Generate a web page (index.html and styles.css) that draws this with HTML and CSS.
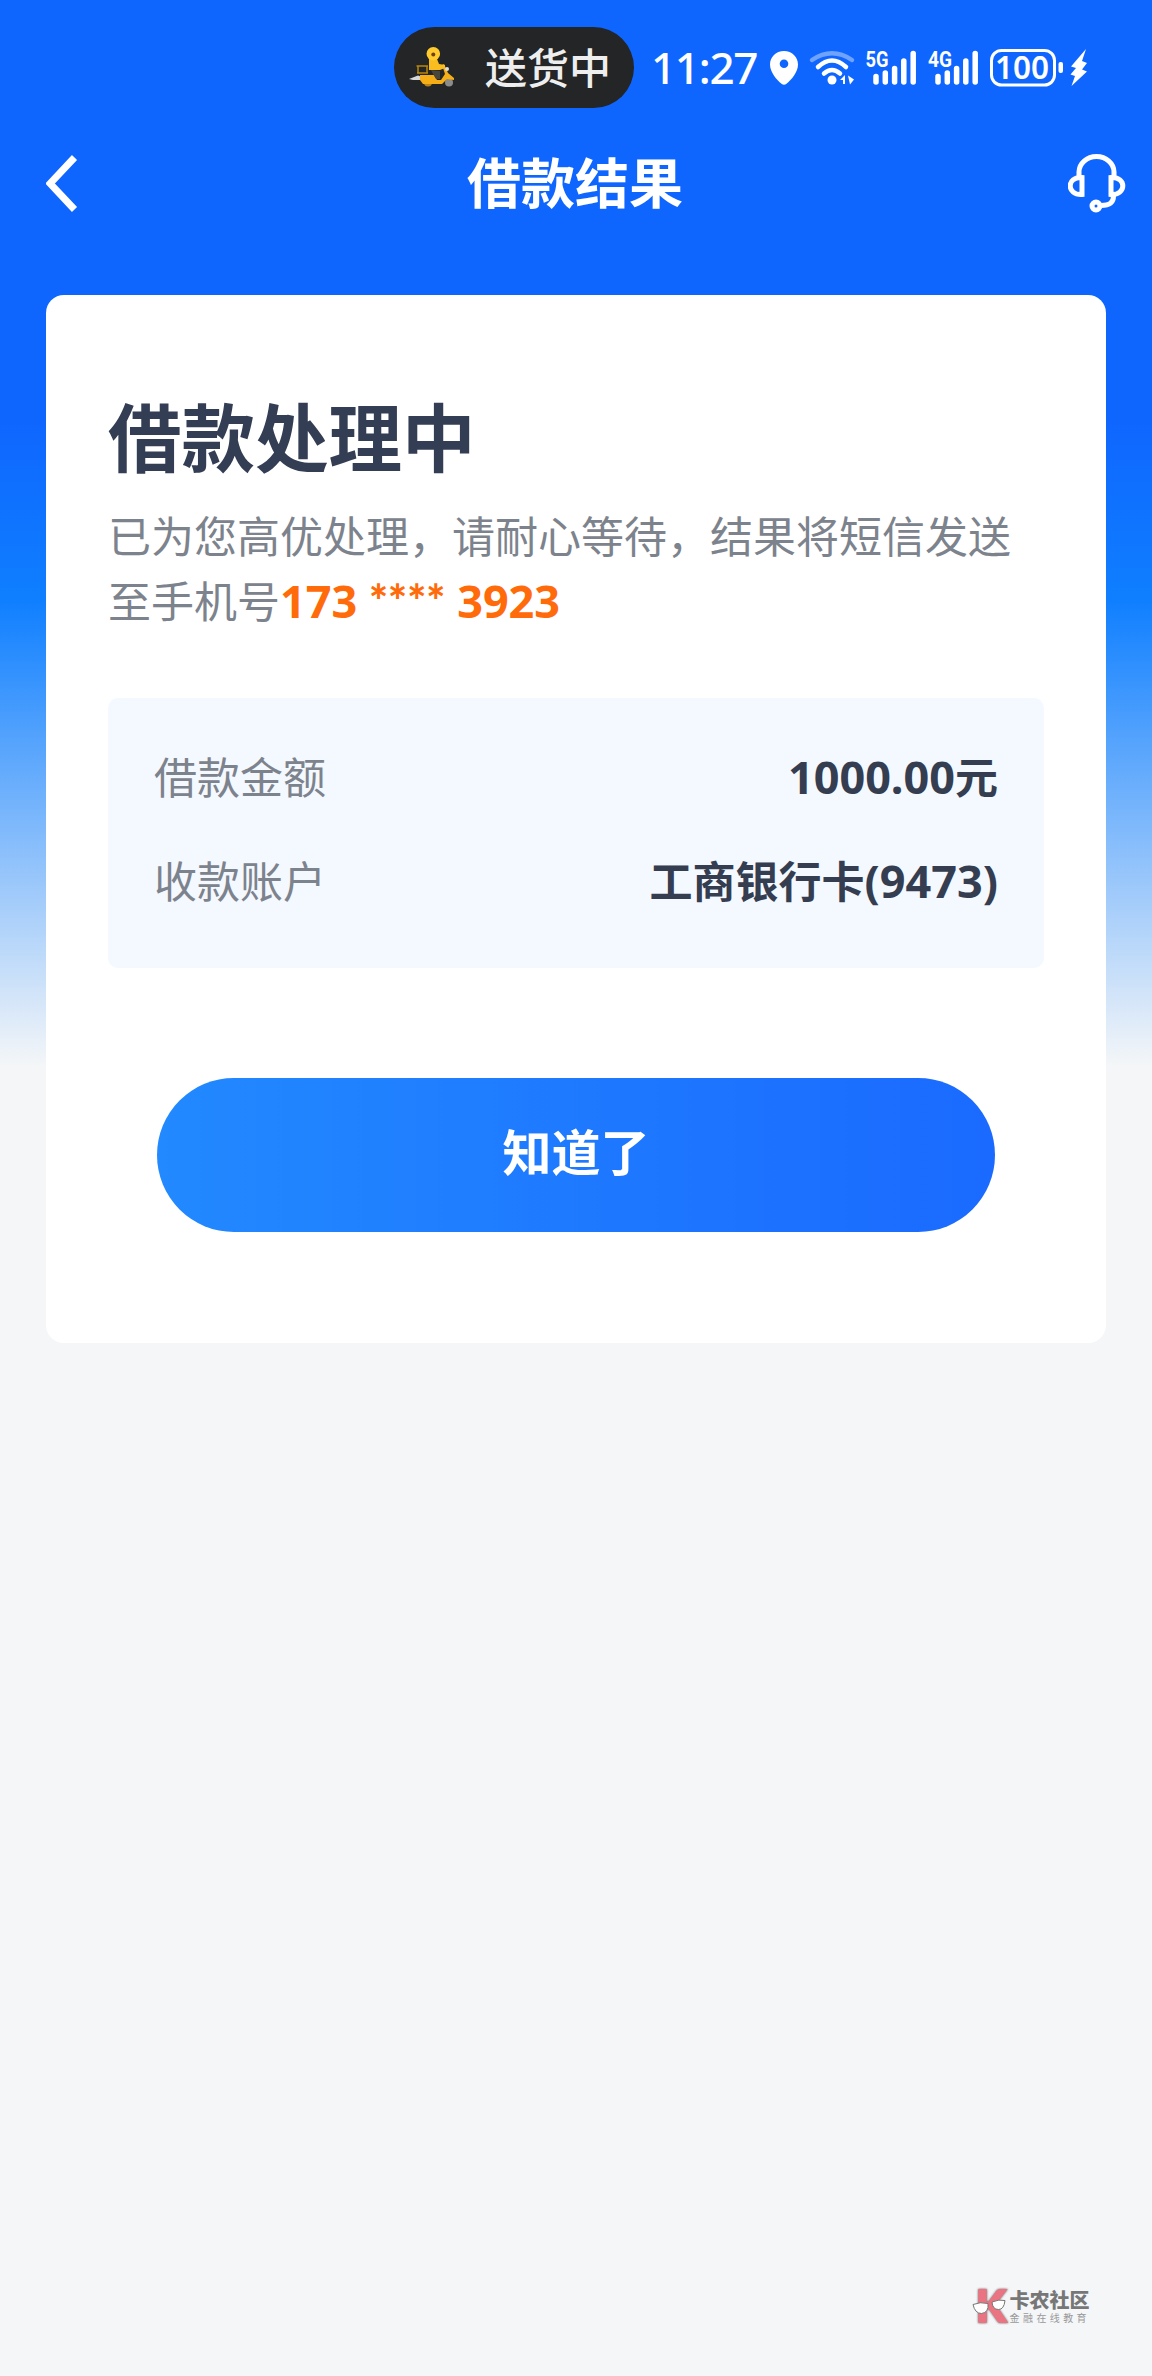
FILE: index.html
```
<!DOCTYPE html>
<html lang="zh-CN">
<head>
    <meta charset="UTF-8" />
    <meta name="viewport" content="width=device-width, initial-scale=1.0" />
    <link rel="stylesheet" href="styles.css">
    <title>借款结果</title>
</head>
<body>
    <div class="page">
        <div class="status-bar">
            <div class="pill">
                <svg class="courier" width="46" height="42" viewBox="0 0 46 42">
                    <path d="M0 32L9 28.500L13 30V33L4 33Z" fill="#d8d8d8" />
                    <path d="M7.500 19H19M9 19.500V26M18 19.500V26M8 26H19" fill="none" stroke="#b8860b" stroke-width="1.500" />
                    <circle cx="19" cy="35.500" r="4" fill="#b9831a" />
                    <circle cx="40" cy="35.500" r="4" fill="#8b8b8b" />
                    <path d="M11 28H25L28 33H32L36 27L33 18L35 17L39 26L45 31V33L38 32L33 37H14L11 33Z" fill="#f5ae16" />
                    <path d="M22 23L31 24V32H27L24 27Z" fill="#4a4639" />
                    <path d="M20 12H28L30 17L36 18V21L31 23H20Z" fill="#f9bd20" />
                    <circle cx="24.300" cy="6.800" r="6.800" fill="#ffcb2e" />
                    <circle cx="24.300" cy="7.500" r="2" fill="#70420d" />
                    <circle cx="38" cy="22" r="2" fill="#ddd" />
                </svg>
                <span>送货中</span>
            </div>
            <span class="time">11:27</span>
            <svg class="icons" width="320" height="40" viewBox="768 48 320 40">
                <!-- location -->
                <path fill="#fff" fill-rule="evenodd" d="M784 51c-8 0-14 6-14 13.500c0 8 7 15.500 11.500 19.300q2.500 1.800 5 0C791 80 798 72.500 798 64.500C798 57 792 51 784 51zm0 8.500a4.300 4.300 0 1 1 0 8.600a4.300 4.300 0 0 1 0-8.600z" />
                <!-- wifi -->
                <g fill="none" stroke="#fff" stroke-width="4.500" stroke-linecap="round">
                    <path d="M812 60Q832 46.500 852 60" stroke-opacity=".4" />
                    <path d="M818 67Q832 54 846 67" />
                    <path d="M824 73.500Q832 66.500 840 73.500" />
                </g>
                <circle cx="832" cy="80" r="4.500" fill="#fff" />
                <path fill="#fff" d="M840 80l5-5v9h-2v-4zM848 75.500l6 4-4 5z" />
                <!-- signal bars -->
                <g stroke="#fff" stroke-width="5.500" stroke-linecap="round">
                    <path d="M876 76.500V82M885.300 73V82M894.600 68.500V82M903.800 61V82M913.200 53.500V82" />
                    <path d="M938 76.500V82M947.300 73V82M956.600 68.500V82M965.800 61V82M975.200 53.500V82" />
                </g>
                <text class="net" x="865.500" y="67" textLength="23" lengthAdjust="spacingAndGlyphs">5G</text>
                <text class="net" x="928" y="67" textLength="24" lengthAdjust="spacingAndGlyphs">4G</text>
                <!-- battery -->
                <rect x="991.500" y="50.500" width="63" height="34.500" rx="10" fill="none" stroke="#fff" stroke-width="3" />
                <rect x="1058.500" y="62" width="4.500" height="11" rx="2" fill="#fff" />
                <text class="level" x="995" y="79" textLength="54" lengthAdjust="spacingAndGlyphs">100</text>
                <path fill="#fff" d="M1086 49L1071 66.500L1076 68L1070.500 74.500L1075 76L1071.500 86L1087 71.500L1082 69.500L1087 63L1082 61Z" />
            </svg>
        </div>

        <div class="nav-bar">
            <svg class="back" width="34" height="58" viewBox="0 0 34 58">
                <path d="M28.500 2.500L4 28.500L28.500 54.500" fill="none" stroke="#fff" stroke-width="7" />
            </svg>
            <h1>借款结果</h1>
            <svg class="service" width="58" height="60" viewBox="0 0 58 60">
                <g fill="none" stroke="#fff" stroke-width="5">
                    <path d="M11 23V18A17.500 15.500 0 0 1 46 18V23" />
                    <path d="M14 23.500V40.500C-1.500 41.500-2 22.500 14 23.500z" />
                    <path d="M43 23.500V40.500C58.500 41.500 59 22.500 43 23.500z" />
                    <path d="M45.500 42C45.500 49 41.500 51.500 33 51.500" />
                    <circle cx="28" cy="52" r="4" />
                </g>
            </svg>
        </div>

        <div class="card">
            <h2>借款处理中</h2>
            <p class="desc">已为您高优处理，请耐心等待，结果将短信发送至手机号<span class="phone">173 <span class="mask">****</span> 3923</span></p>
            <div class="details">
                <div class="row">
                    <span class="label">借款金额</span>
                    <span class="value"><span class="num">1000.00</span>元</span>
                </div>
                <div class="row">
                    <span class="label">收款账户</span>
                    <span class="value">工商银行卡<span class="num">(9473)</span></span>
                </div>
            </div>
            <button>知道了</button>
        </div>

        <div class="watermark">
            <svg class="logo" width="36" height="38" viewBox="0 0 36 38">
                <text class="mark" x="4" y="34.500" textLength="30" lengthAdjust="spacingAndGlyphs">K</text>
                <g fill="#fff" stroke="#777" stroke-width="1">
                    <path d="M1 17.500q7-3 15-1q1 9-6.500 10q-6.500 0-8.500-9z" />
                    <path d="M20 15q7-3 13-1.500q-1 9-6.500 9q-6 0-6.500-7.500z" />
                </g>
            </svg>
            <div>
                <div class="brand">卡农社区</div>
                <div class="slogan">金融在线教育</div>
            </div>
        </div>
    </div>
</body>
</html>
```
FILE: styles.css
```
* {
    box-sizing: border-box;
    margin: 0;
    padding: 0;
}
body {
    background-color: #f4f6f8;
    font-family: "Noto Sans CJK SC", sans-serif;
}
.page {
    display: flex;
    flex-direction: column;
    height: 2376px;
    padding: 27px 46px 0;
    background: linear-gradient(#0f66ff 0, #0f66ff 420px, #0f7fff 600px, #f4f6f8 1065px);
}
.status-bar {
    display: flex;
    align-items: center;
    height: 81px;
    margin-left: 348px;
    color: #fff;
}
.pill {
    display: flex;
    align-items: center;
    flex-shrink: 0;
    width: 240px;
    height: 81px;
    padding-left: 15px;
    border-radius: 41px;
    background-color: #232527;
    color: #eee;
    font-size: 42px;
    font-weight: 500;
    line-height: 77px;
}
.pill span {
    padding-bottom: 4px;
}
.courier {
    margin-right: 30px;
}
.time {
    flex-shrink: 0;
    width: 115px;
    padding-left: 17px;
    font-family: "Noto Sans", sans-serif;
    font-size: 44px;
    font-weight: 500;
    letter-spacing: -1.3px;
    line-height: 81px;
}
.icons {
    flex-shrink: 0;
    margin-left: 19px;
    overflow: visible;
}
.net {
    fill: #fff;
    font: 700 22px Roboto, sans-serif;
}
.level {
    fill: #fff;
    font: 600 32px "Noto Sans", sans-serif;
}
.nav-bar {
    display: flex;
    align-items: center;
    justify-content: space-between;
    height: 151px;
    margin-right: -20px;
}
.nav-bar h1 {
    padding-bottom: 6px;
    padding-left: 2px;
    color: #fff;
    font-size: 54px;
    font-weight: 700;
    line-height: 80px;
}
.card {
    height: 1048px;
    margin-top: 36px;
    padding: 86px 62px 0;
    border-radius: 18px;
    background-color: #fff;
}
.card h2 {
    color: #333e54;
    font-size: 73.5px;
    font-weight: 700;
    line-height: 106px;
}
.desc {
    margin-top: 15px;
    color: #7d838d;
    font-size: 43px;
    line-height: 65px;
}
.phone,
.num {
    font-family: "Noto Sans", sans-serif;
    font-size: 45px;
    font-weight: 700;
    line-height: 1;
}
.phone {
    color: #ff6b0a;
}
.mask {
    font-family: Lato, sans-serif;
    font-weight: 900;
}
.details {
    height: 270px;
    margin-top: 66px;
    padding: 25px 46px;
    border-radius: 10px;
    background-color: #f4f8ff;
}
.row {
    display: flex;
    align-items: center;
    justify-content: space-between;
    height: 104px;
    font-size: 43px;
    line-height: 64px;
}
.label {
    color: #7d838d;
}
.value {
    color: #343e50;
    font-weight: 700;
}
button {
    display: block;
    width: 838px;
    height: 154px;
    margin: 110px auto 0;
    padding-bottom: 11px;
    border: none;
    border-radius: 77px;
    background: linear-gradient(90deg, #2289ff, #1a6aff);
    color: #fff;
    font-family: inherit;
    font-size: 49px;
    font-weight: 700;
}
.watermark {
    display: flex;
    align-items: center;
    gap: 2px;
    margin: auto 16px 51px auto;
}
.logo {
    overflow: visible;
}
.mark {
    fill: #ea7482;
    stroke: #ea7482;
    stroke-width: 2;
    font: 900 44px Lato, sans-serif;
    filter: drop-shadow(0 0 1px #555);
}
.brand {
    color: #777;
    font-size: 20px;
    font-weight: 900;
    line-height: 22px;
}
.slogan {
    color: #999;
    font-size: 10px;
    letter-spacing: 3.4px;
    line-height: 13px;
}
```
